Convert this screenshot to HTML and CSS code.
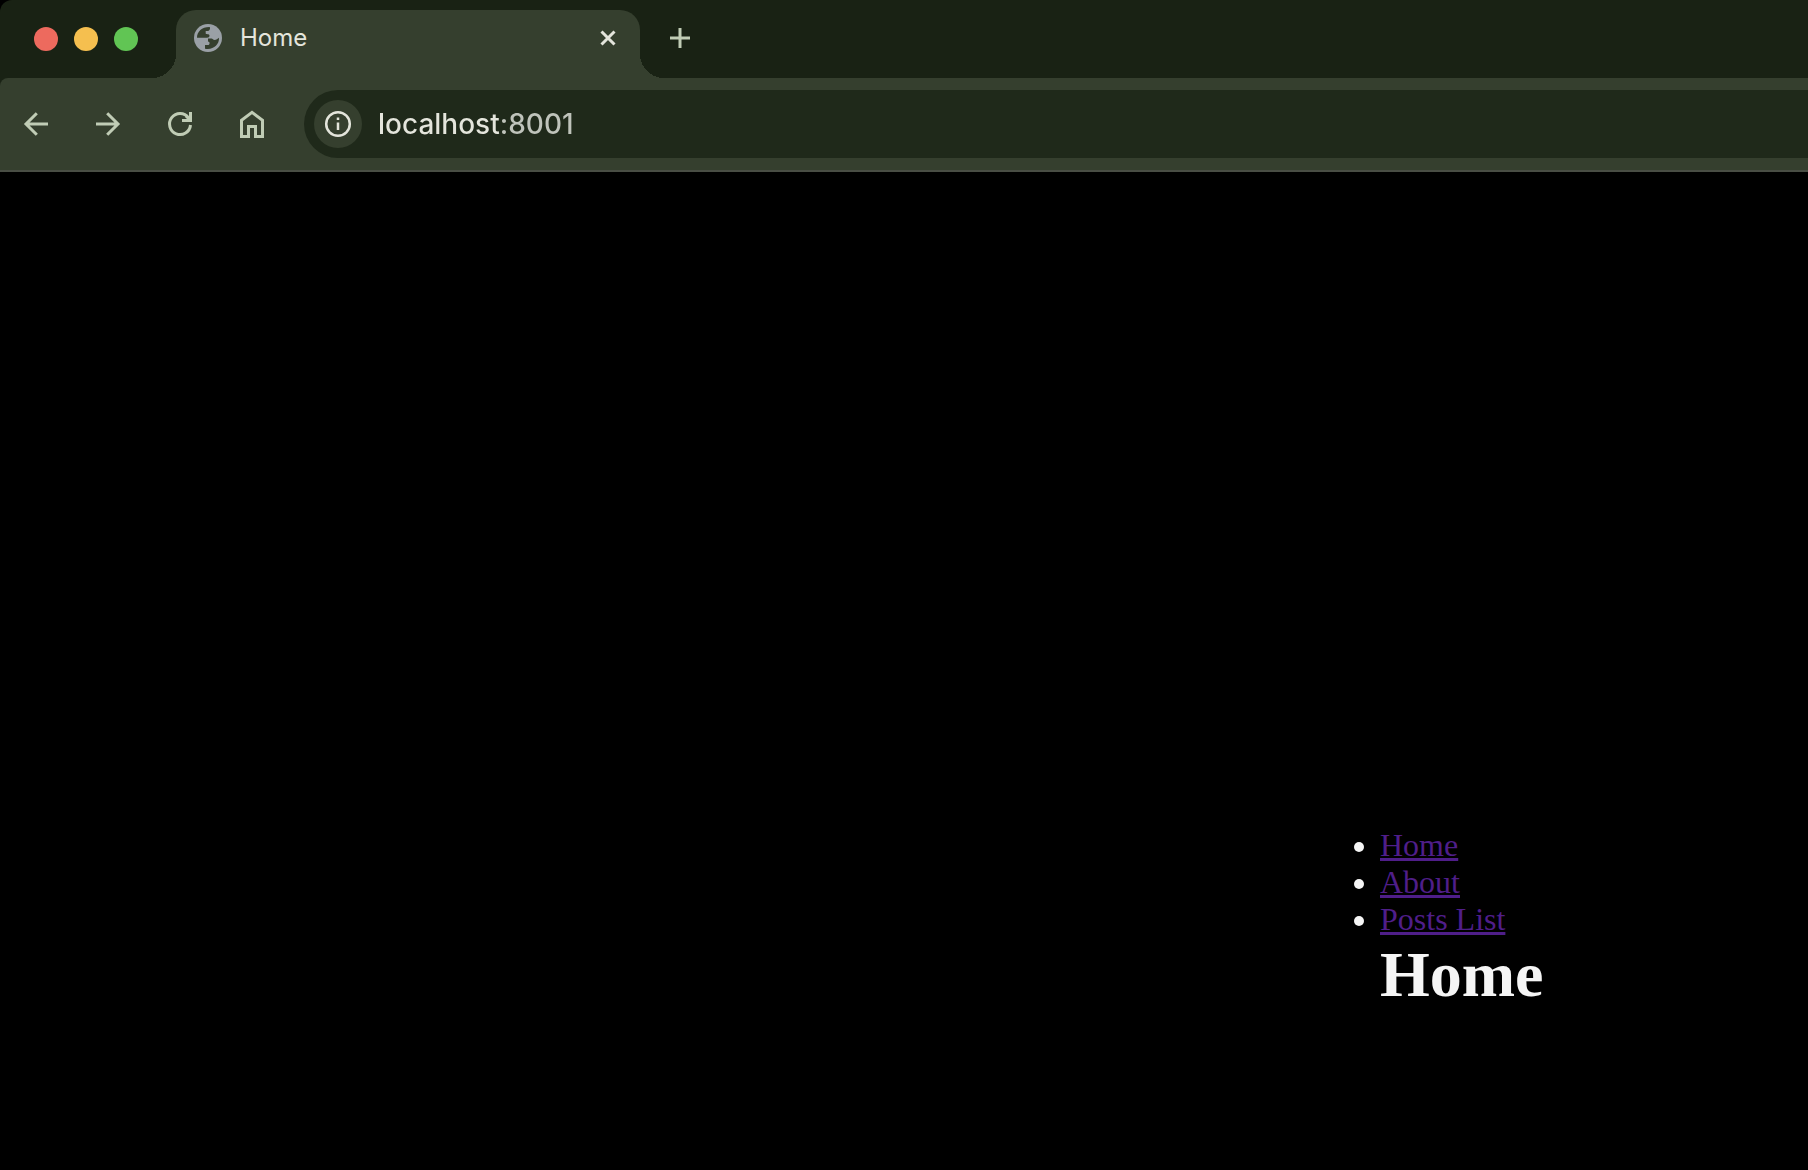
FILE: index.html
```html
<!DOCTYPE html>
<html lang="en">
<head>
<meta charset="utf-8">
<title>Home</title>
<link rel="stylesheet" href="styles.css">
</head>
<body>
<header class="browser">
  <div class="tab-strip">
    <div class="window-controls">
      <button class="light light-close" aria-label="Close window"></button>
      <button class="light light-minimize" aria-label="Minimize window"></button>
      <button class="light light-zoom" aria-label="Zoom window"></button>
    </div>
    <div class="tab">
      <svg class="tab-icon" viewBox="0 0 28 28" aria-hidden="true">
        <circle cx="14" cy="14" r="14" fill="#9aa0a6"/>
        <path class="globe-cut" d="M3 13.700C3 7.500 8 2.800 15.800 3C16.500 5 15.500 7 13.500 7H11.700V9.500C11.700 10.500 15.500 9.500 15.500 11.500C15.500 13 14.500 13.700 13 13.700Z"/>
        <path class="globe-cut" d="M11 24.700V21H14.500C16 20.500 16 17.500 14 17.500V14.500H17C18.500 14 19 16 20.500 16C22.500 16 23.500 15 25 13.800C25.500 21 18.500 26.500 11 24.700Z"/>
      </svg>
      <span class="tab-title">Home</span>
      <button class="icon-button tab-close" aria-label="Close tab">
        <svg viewBox="0 0 16 16" aria-hidden="true"><path d="M1.500 1.500L14.500 14.500M14.500 1.500L1.500 14.500"/></svg>
      </button>
    </div>
    <button class="icon-button new-tab" aria-label="New tab">
      <svg viewBox="0 0 20 20" aria-hidden="true"><path d="M10 0V20M0 10H20"/></svg>
    </button>
  </div>
  <div class="toolbar">
    <button class="icon-button" aria-label="Back">
      <svg viewBox="0 0 28 28" aria-hidden="true"><path d="M26 14H5M14.800 3.200L4 14L14.800 24.800"/></svg>
    </button>
    <button class="icon-button" aria-label="Forward">
      <svg viewBox="0 0 28 28" aria-hidden="true"><path d="M2 14H23M13.200 3.200L24 14L13.200 24.800"/></svg>
    </button>
    <button class="icon-button" aria-label="Reload">
      <svg viewBox="0 0 28 28" aria-hidden="true"><path d="M24.500 15A10.500 10.500 0 1 1 22.500 7.800M24.500 2V10.500H16M24.500 10.500L20 6"/></svg>
    </button>
    <button class="icon-button" aria-label="Home page">
      <svg viewBox="0 0 28 28" aria-hidden="true"><path d="M3.500 26.500V10.300L14 2.300L24.500 10.300V26.500H17.500V16.500H10.500V26.500Z"/></svg>
    </button>
    <div class="omnibox">
      <button class="site-info" aria-label="View site information">
        <svg viewBox="0 0 28 28" aria-hidden="true"><circle cx="14" cy="14" r="11.800"/><path d="M14 12.500V20M14 7.500V10"/></svg>
      </button>
      <input class="address" type="text" aria-label="Address" value="localhost:8001">
    </div>
  </div>
</header>
<main class="page">
  <div class="content">
    <nav>
      <ul class="menu">
        <li><a href="#home">Home</a></li>
        <li><a href="#about">About</a></li>
        <li><a href="#posts">Posts List</a></li>
      </ul>
    </nav>
    <h1 class="title">Home</h1>
  </div>
</main>
</body>
</html>
```
FILE: styles.css
```css
:root {
  --frame: #192214;
  --chrome: #353f2e;
  --field: #1f291a;
  --icon: #c0ccb5;
  --text: #e4e5dc;
}

* {
  box-sizing: border-box;
}

body {
  margin: 0;
  min-height: 100vh;
  display: flex;
  flex-direction: column;
  background: #000;
  color: #f5f5f5;
  font-family: "Liberation Serif", "Times New Roman", serif;
  font-size: 32px;
}

button {
  padding: 0;
  border: 0;
  background: none;
}

.browser {
  font-family: Inter, "Liberation Sans", sans-serif;
  background: var(--frame);
  border-top-left-radius: 12px;
}

.tab-strip {
  display: flex;
  height: 78px;
  padding: 10px 0 0 34px;
}

.window-controls {
  display: flex;
  gap: 16px;
  width: 142px;
  padding-top: 17px;
}

.light {
  width: 24px;
  height: 24px;
  border-radius: 50%;
}

.light-close { background: #ed6a5e; }
.light-minimize { background: #f5bf4f; }
.light-zoom { background: #61c554; }

.tab {
  position: relative;
  display: flex;
  align-items: center;
  width: 464px;
  padding: 0 24px 12px 18px;
  border-radius: 20px 20px 0 0;
  background: var(--chrome);
}

.tab::before,
.tab::after {
  content: "";
  position: absolute;
  bottom: 0;
  width: 24px;
  height: 24px;
}

.tab::before {
  right: 100%;
  background: radial-gradient(circle at 0 0, transparent 24px, var(--chrome) 24px);
}

.tab::after {
  left: 100%;
  background: radial-gradient(circle at 100% 0, transparent 24px, var(--chrome) 24px);
}

.tab-icon {
  width: 28px;
  height: 28px;
}

.globe-cut {
  fill: var(--chrome);
}

.tab-title {
  flex: 1;
  padding-left: 18px;
  color: var(--text);
  font-size: 24px;
  line-height: 28px;
}

.icon-button {
  display: flex;
  align-items: center;
  justify-content: center;
  color: var(--icon);
}

.icon-button svg {
  width: 28px;
  height: 28px;
  fill: none;
  stroke: currentColor;
  stroke-width: 3;
}

.tab-close {
  color: var(--text);
}

.tab-close svg {
  width: 16px;
  height: 16px;
}

.new-tab {
  width: 80px;
  height: 56px;
}

.new-tab svg {
  width: 20px;
  height: 20px;
}

.toolbar {
  display: flex;
  align-items: center;
  gap: 44px;
  height: 94px;
  padding: 10px 0 10px 22px;
  border-bottom: 2px solid #494e44;
  border-top-left-radius: 8px;
  background: var(--chrome);
}

.omnibox {
  flex: 1;
  display: flex;
  align-items: center;
  gap: 16px;
  height: 68px;
  margin-left: -6px;
  padding-left: 10px;
  border-radius: 34px 0 0 34px;
  background: var(--field);
}

.site-info {
  display: flex;
  align-items: center;
  justify-content: center;
  width: 48px;
  height: 48px;
  border-radius: 50%;
  background: var(--chrome);
  color: var(--text);
}

.site-info svg {
  width: 28px;
  height: 28px;
  fill: none;
  stroke: currentColor;
  stroke-width: 2.5;
}

.address {
  flex: 1;
  min-width: 0;
  padding: 0;
  border: 0;
  outline: 0;
  background: linear-gradient(to right, var(--text) 121px, #bfc3bb 121px);
  background-clip: text;
  color: transparent;
  font: 500 28px/40px Inter, "Liberation Sans", sans-serif;
}

.page {
  flex: 1;
  display: grid;
  grid-template-columns: 345fr 107fr;
  align-content: end;
  padding-bottom: 158px;
}

.content {
  grid-column: 2;
}

.menu {
  margin: 0;
  padding: 0;
  line-height: 37px;
}

.menu a {
  color: #4f1e89;
  text-decoration-thickness: 3px;
  text-underline-offset: 2px;
}

.title {
  margin: 0;
  font-size: 64px;
  line-height: 74px;
}
```
